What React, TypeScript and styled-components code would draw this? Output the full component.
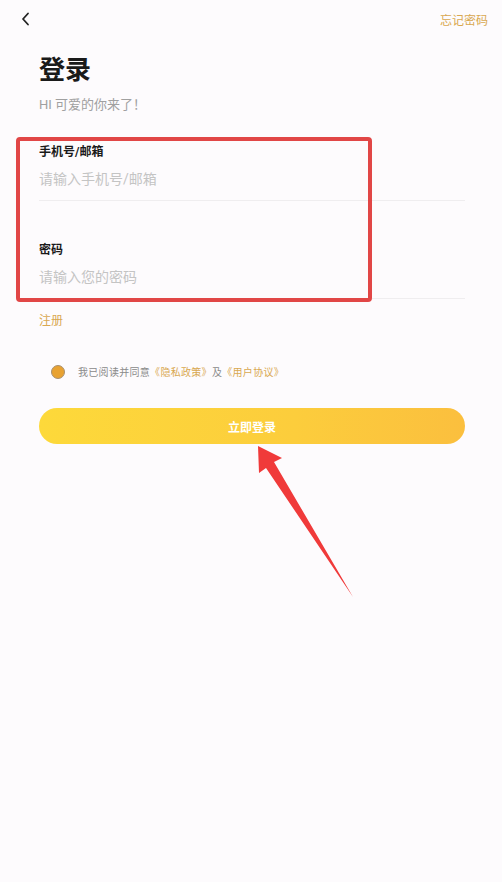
import React from 'react';
import styled, { createGlobalStyle } from 'styled-components';

const Global = createGlobalStyle`
  html, body {
    margin: 0;
    padding: 0;
    background: #fdfbfd;
    font-family: Roboto, "Noto Sans CJK SC", sans-serif;
  }
`;

const Page = styled.div`
  position: relative;
  width: 502px;
  min-height: 882px;
  background: #fdfbfd;
`;

const TopBar = styled.div`
  display: flex;
  align-items: center;
  justify-content: space-between;
  height: 38px;
  padding: 0 14px 0 20px;
`;

const BackBtn = styled.div`
  width: 16px;
  height: 16px;
  display: flex;
  align-items: center;
`;

const ForgotLink = styled.span`
  font-size: 12px;
  color: #d9a850;
`;

const Content = styled.div`
  padding: 0 37px 0 39px;
`;

const Title = styled.h1`
  margin: 15px 0 0;
  font-size: 26px;
  line-height: 34px;
  font-weight: 700;
  color: #1a1a1a;
`;

const Subtitle = styled.p`
  margin: 9px 0 0;
  font-size: 13px;
  line-height: 18px;
  color: #a0a0a0;
`;

const Field = styled.div<{ $top: number }>`
  margin-top: ${p => p.$top}px;
  border-bottom: 1px solid #efedef;
  padding-bottom: 11px;
`;

const Label = styled.div`
  font-size: 12px;
  line-height: 16px;
  font-weight: 700;
  color: #1a1a1a;
`;

const Input = styled.input`
  display: block;
  width: 100%;
  margin-top: 9px;
  padding: 0;
  border: none;
  outline: none;
  background: transparent;
  font-family: inherit;
  font-size: 14px;
  line-height: 20px;
  color: #333;
  &::placeholder {
    color: #c4c4c4;
  }
`;

const Register = styled.div`
  margin-top: 14px;
  font-size: 12px;
  line-height: 16px;
  color: #d9a850;
`;

const AgreeRow = styled.div`
  display: flex;
  align-items: center;
  gap: 13px;
  margin: 35px 0 0 12px;
  font-size: 10px;
  letter-spacing: 0.3px;
  color: #8a8a8a;
`;

const Radio = styled.span`
  width: 12px;
  height: 12px;
  border-radius: 50%;
  background: #e8a232;
  border: 1px solid #a89070;
`;

const Gold = styled.span`
  color: #d9a850;
`;

const LoginButton = styled.button`
  display: block;
  width: 100%;
  height: 36px;
  margin-top: 29px;
  border: none;
  border-radius: 18px;
  background: linear-gradient(90deg, #fdd93a 0%, #fccd3c 60%, #fbbf3e 100%);
  color: #fff;
  font-family: inherit;
  font-size: 12px;
  font-weight: 700;
`;

const Highlight = styled.div`
  position: absolute;
  left: 16px;
  top: 137px;
  width: 348px;
  height: 157px;
  border: 4px solid #e14646;
  border-radius: 4px;
  pointer-events: none;
`;

const Arrow = styled.svg`
  position: absolute;
  left: 0;
  top: 0;
  pointer-events: none;
`;

export default function App() {
  return (
    <Page>
      <Global />
      <TopBar>
        <BackBtn>
          <svg width="12" height="14" viewBox="0 0 12 14">
            <path d="M8 1.5 L3 7 L8 12.5" fill="none" stroke="#222" strokeWidth="1.8" strokeLinecap="round" strokeLinejoin="round" />
          </svg>
        </BackBtn>
        <ForgotLink>忘记密码</ForgotLink>
      </TopBar>
      <Content>
        <Title>登录</Title>
        <Subtitle>HI 可爱的你来了！</Subtitle>
        <Field $top={30}>
          <Label>手机号/邮箱</Label>
          <Input placeholder="请输入手机号/邮箱" />
        </Field>
        <Field $top={41}>
          <Label>密码</Label>
          <Input type="password" placeholder="请输入您的密码" />
        </Field>
        <Register>注册</Register>
        <AgreeRow>
          <Radio />
          <span>
            我已阅读并同意<Gold>《隐私政策》</Gold>及<Gold>《用户协议》</Gold>
          </span>
        </AgreeRow>
        <LoginButton>立即登录</LoginButton>
      </Content>
      <Highlight />
      <Arrow width="502" height="882" viewBox="0 0 502 882">
        <polygon points="258,446 282,458 274,462 353,597 266,468 259,473" fill="#f03a3a" />
      </Arrow>
    </Page>
  );
}
